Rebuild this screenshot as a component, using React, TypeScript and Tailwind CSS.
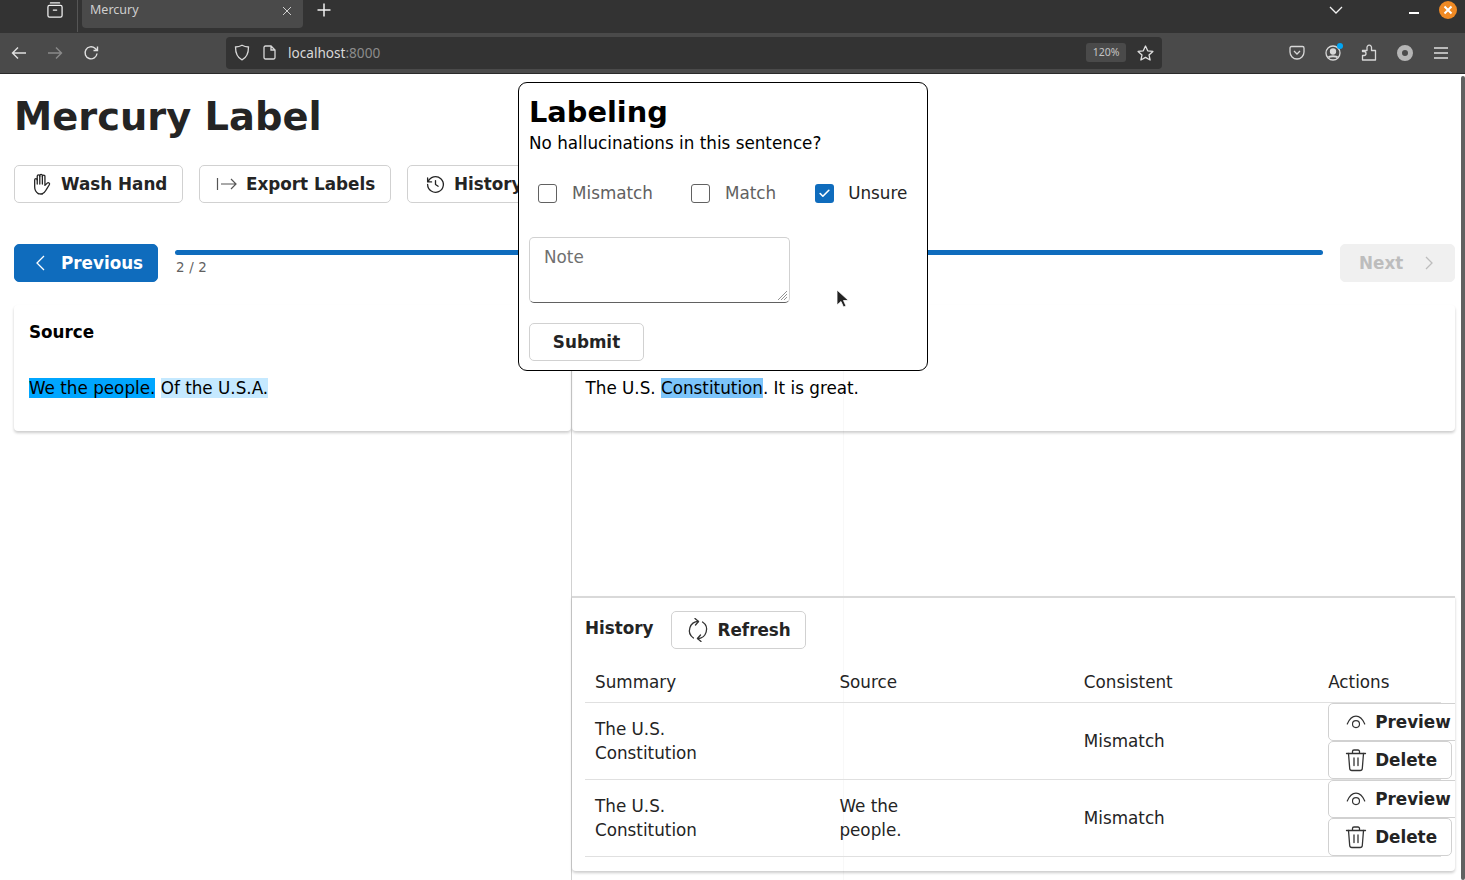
import React from 'react'
import { Check } from 'lucide-react'

const btn = 'flex items-center h-[38px] bg-white border border-[#d1d1d1] rounded-[5px] text-[#242424] font-bold text-[16.800px] leading-[24px] shrink-0'

const Stroke: React.FC<{ size?: number; className?: string; sw?: string; children: React.ReactNode }> = ({ size = 20, className, sw = '1.500', children }) => (
  <svg width={size} height={size} viewBox="0 0 24 24" fill="none" stroke="currentColor" strokeWidth={sw} strokeLinecap="round" strokeLinejoin="round" className={className}>
    {children}
  </svg>
)

const HandIcon = () => (
  <Stroke size={22} sw="1.400" className="mr-[8px] text-[#242424]">
    <path d="M8 22.500c-2.500-1.500-4-4-4-7.500V7.500a1.400 1.400 0 0 1 2.800 0V12" />
    <path d="M6.800 7.500V3.500a1.400 1.400 0 0 1 2.800 0V12" />
    <path d="M9.600 3.500V2.800a1.400 1.400 0 0 1 2.800 0V12" />
    <path d="M12.400 3.800a1.400 1.400 0 0 1 2.800 0V13.500l2.500-2.500c1.300-1.300 3.300 0.200 2.300 1.800l-3.500 5.700c-1 1.800-2.300 3.500-4.500 4.300" />
    <path d="M8 22.500c1.500 0.500 3 0.500 4.500 0.300" />
  </Stroke>
)

const RefreshIcon = () => (
  <Stroke size={24} sw="1.300" className="mr-[8px] text-[#333]">
    <path d="M12.500 3.500A9 9 0 0 0 7.500 20" />
    <path d="M9 0.500l3.500 3-3 3.500" />
    <path d="M11.500 20.500A9 9 0 0 0 16.500 4" />
    <path d="M15 23.500l-3.500-3 3-3.500" />
  </Stroke>
)

const EyeIcon = () => (
  <Stroke size={20} sw="1.400" className="text-[#333] shrink-0">
    <path d="M1.500 14.500C4 8.500 8 5 12 5s8 3.500 10.500 9.500" />
    <circle cx="12" cy="14.500" r="4.200" />
  </Stroke>
)

const TrashIcon = () => (
  <Stroke size={24} sw="1.300" className="text-[#333] shrink-0">
    <path d="M2.500 5.500h19M8.500 5V3.500A1.500 1.500 0 0 1 10 2h4a1.500 1.500 0 0 1 1.500 1.500V5" />
    <path d="M4.500 5.500l1.200 15a2.200 2.200 0 0 0 2.200 2h8.200a2.200 2.200 0 0 0 2.200-2l1.200-15" />
    <path d="M10 10v7.500M14 10v7.500" />
  </Stroke>
)

const rows = [
  { summary: ['The U.S.', 'Constitution'], source: [] as string[], consistent: 'Mismatch' },
  { summary: ['The U.S.', 'Constitution'], source: ['We the', 'people.'], consistent: 'Mismatch' },
]

const TabBar = () => (
  <div className="h-[33px] bg-[#333333] flex items-start shrink-0 text-[#f2f2f2]">
    <div className="w-[78px] h-[32px] border-r border-[#555] flex items-start justify-end pr-[12px] shrink-0">
      <Stroke size={20}>
        <path d="M6.500 3.500h11" />
        <rect x="3.500" y="6.500" width="17" height="14" rx="2" />
        <path d="M10 12h4" />
      </Stroke>
    </div>
    <div className="ml-[4px] w-[221px] h-[28px] bg-[#4a4a4a] rounded-b-[4px] flex items-center justify-between pl-[8px] pr-[11px] pb-[8px] text-[12.500px] text-[#cfcfcf] font-['Noto_Sans',sans-serif]">
      <span>Mercury</span>
      <svg width="10" height="10" viewBox="0 0 10 10" stroke="#cfcfcf" strokeWidth="1" className="mt-[1px]"><path d="M1 1l8 8M9 1l-8 8" /></svg>
    </div>
    <svg width="14" height="14" viewBox="0 0 14 14" stroke="#f2f2f2" strokeWidth="1.500" className="ml-[14px] mt-[3px]"><path d="M7 0.500v13M0.500 7h13" /></svg>
    <div className="flex-1" />
    <svg width="14" height="8" viewBox="0 0 14 8" fill="none" stroke="#f2f2f2" strokeWidth="1.300" className="mt-[6px] mr-[66px]"><path d="M1 1l6 6 6-6" /></svg>
    <div className="w-[10px] h-[2px] bg-white mt-[12px] mr-[20px]" />
    <div className="w-[18px] h-[18px] rounded-full bg-[#f08a24] flex items-center justify-center mt-[1px] mr-[8px]">
      <svg width="10" height="10" viewBox="0 0 10 10" stroke="#fff" strokeWidth="2"><path d="M1.500 1.500l7 7M8.500 1.500l-7 7" /></svg>
    </div>
  </div>
)

const ToolBar = () => (
  <div className="h-[41px] bg-[#4a4a4a] border-b border-[#2a2a2a] flex items-center shrink-0 text-[#e0e0e0] pb-[1px]">
    <svg width="16" height="14" viewBox="0 0 16 14" fill="none" stroke="#e0e0e0" strokeWidth="1.400" className="ml-[11px]"><path d="M15 7H1.500M7 1.500L1.500 7 7 12.500" /></svg>
    <svg width="16" height="14" viewBox="0 0 16 14" fill="none" stroke="#8a8a8a" strokeWidth="1.400" className="ml-[20px]"><path d="M1 7h13.500M9 1.500L14.500 7 9 12.500" /></svg>
    <svg width="16" height="16" viewBox="0 0 16 16" fill="none" stroke="#e0e0e0" strokeWidth="1.400" className="ml-[20px]"><path d="M14 8.500a6 6 0 1 1-2-5.200L14.500 5.500M14.500 1.500v4h-4" /></svg>
    <div className="ml-[127px] w-[936px] h-[32px] bg-[#333333] rounded-[4px] flex items-center">
      <svg width="16" height="17" viewBox="0 0 16 17" fill="none" stroke="#d8d8d8" strokeWidth="1.300" className="ml-[8px]"><path d="M8 1.200c2 1.100 4.200 1.700 6.500 1.800 0 5.500-1.500 10.500-6.500 12.800C3 13.500 1.500 8.500 1.500 3 3.800 2.900 6 2.300 8 1.200z" /></svg>
      <svg width="13" height="15" viewBox="0 0 13 15" fill="none" stroke="#d8d8d8" strokeWidth="1.300" className="ml-[13px]"><path d="M2.500 1h5.500l4 4v7.500a1.500 1.500 0 0 1-1.500 1.500h-8A1.500 1.500 0 0 1 1 12.500v-10A1.500 1.500 0 0 1 2.500 1zM8 1v4h4" /></svg>
      <span className="ml-[12px] mt-[1px] text-[13.600px] text-[#d8d8d8] font-['Noto_Sans',sans-serif]">localhost<span className="text-[#8c8c8c]">:8000</span></span>
      <div className="flex-1" />
      <div className="w-[40px] h-[19px] bg-[#4a4a4a] rounded-[3px] flex items-center justify-center text-[10.500px] text-[#c4c4c4] font-['Noto_Sans',sans-serif]">120%</div>
      <svg width="17" height="16" viewBox="0 0 17 16" fill="none" stroke="#e0e0e0" strokeWidth="1.300" strokeLinejoin="round" className="ml-[11px] mr-[8px]"><path d="M8.500 1l2.200 4.800 5.200.6-3.900 3.500 1.100 5.100-4.600-2.600L3.900 15 5 9.900 1.100 6.400l5.200-.6z" /></svg>
    </div>
    <div className="flex-1" />
    <svg width="16" height="15" viewBox="0 0 16 15" fill="none" stroke="#d8d8d8" strokeWidth="1.300" className="mr-[20px]"><path d="M2.500 1.500h11A1.500 1.500 0 0 1 15 3v4a7 7 0 0 1-14 0V3a1.500 1.500 0 0 1 1.500-1.500z" /><path d="M5 6l3 3 3-3" /></svg>
    <div className="relative mr-[20px] w-[16px] h-[16px]">
      <svg width="16" height="16" viewBox="0 0 16 16" fill="none" stroke="#d8d8d8" strokeWidth="1.300"><circle cx="8" cy="8" r="7" /><circle cx="8" cy="6.500" r="2.500" fill="#d8d8d8" /><path d="M3.500 12.500c1-1.600 8-1.600 9 0" strokeWidth="2" /></svg>
      <div className="absolute -top-[2px] -right-[2px] w-[6px] h-[6px] rounded-full bg-[#00a6f5]" />
    </div>
    <svg width="16" height="17" viewBox="0 0 16 17" fill="none" stroke="#d8d8d8" strokeWidth="1.300" strokeLinejoin="round" className="mr-[20px]"><path d="M1.500 16V11.500H3a2 2 0 1 0 0-4H1.500V6.500H6V4a2.300 2.300 0 1 1 4.500 0v2.500h4V16z" /></svg>
    <div className="w-[16px] h-[16px] rounded-full border-[5px] border-[#b5b5b5] bg-[#4a4a4a] mr-[20px]" />
    <svg width="16" height="12" viewBox="0 0 16 12" stroke="#e0e0e0" strokeWidth="1.300" className="mr-[16px]"><path d="M1 1h14M1 6h14M1 11h14" /></svg>
  </div>
)

const Modal = () => (
  <div className="absolute left-[518px] top-[8px] w-[410px] h-[289px] bg-white border border-black rounded-[9px] px-[10px] z-10 text-black">
    <h2 className="font-bold text-[28.800px] leading-[36px] mt-[11px]">Labeling</h2>
    <p className="text-[16.800px] leading-[24px] mt-[1px]">No hallucinations in this sentence?</p>
    <div className="flex items-center h-[20px] mt-[28px] pl-[9px] text-[16.800px]">
      <div className="w-[19px] h-[19px] rounded-[3px] border border-[#616161]" />
      <span className="ml-[15px] mt-[2px] text-[#616161]">Mismatch</span>
      <div className="w-[19px] h-[19px] rounded-[3px] border border-[#616161] ml-[38px]" />
      <span className="ml-[15px] mt-[2px] text-[#616161]">Match</span>
      <div className="w-[19px] h-[19px] rounded-[3px] bg-[#0f6cbd] ml-[39px] flex items-center justify-center">
        <Check size={13} strokeWidth={3} color="#fff" />
      </div>
      <span className="ml-[14px] mt-[2px] text-[#242424]">Unsure</span>
    </div>
    <div className="relative w-[261px] h-[66px] mt-[34px] border border-[#d1d1d1] border-b-[#616161] rounded-[5px] px-[14px] pt-[7px] text-[16.800px] text-[#707070]">
      Note
      <svg width="11" height="11" viewBox="0 0 11 11" stroke="#777" strokeWidth="0.800" className="absolute right-[1px] bottom-[1px]"><path d="M1 10l9-9M4 10l6-6M7 10l3-3" /></svg>
    </div>
    <button className={`${btn} w-[115px] mt-[20px] justify-center`}>Submit</button>
  </div>
)

const ActionBar = () => (
  <div className="flex gap-4 mt-[20px] ml-[14px]">
    <button className={`${btn} w-[169px] pl-[16px]`}>
      <HandIcon />
      Wash Hand
    </button>
    <button className={`${btn} w-[192px] pl-[16px]`}>
      <svg width="22" height="14" viewBox="0 0 22 14" fill="none" stroke="#555" strokeWidth="1.200" className="mr-[8px]"><path d="M1.500 1v12M5 7h15M15 2l5 5-5 5" /></svg>
      Export Labels
    </button>
    <button className={`${btn} w-[150px] pl-[17px]`}>
      <Stroke size={21} className="mr-[8px]"><path d="M3.500 9a9 9 0 1 1-.500 3M3 4.500V9h4.500M12 7.500V12l3 2" /></Stroke>
      History
    </button>
  </div>
)

const HistoryPanel = () => (
  <div className="pl-[13px] pb-[14px]">
    <div className="flex items-start pt-[13px]">
      <span className="font-bold text-[16.800px] text-[#242424] leading-[34px]">History</span>
      <button className={`${btn} w-[135px] ml-[17px] pl-[14px]`}>
        <RefreshIcon />
        Refresh
      </button>
    </div>
    <table className="table-fixed w-[856px] mt-[14px] text-[16.800px] text-[#242424] border-collapse">
      <thead>
        <tr className="h-[39px] border-b border-[#e0e0e0] text-left">
          <th className="font-normal pl-[10px] w-[244.400px]">Summary</th>
          <th className="font-normal pl-[10px] w-[244.400px]">Source</th>
          <th className="font-normal pl-[10px] w-[244.400px]">Consistent</th>
          <th className="font-normal pl-[10px]">Actions</th>
        </tr>
      </thead>
      <tbody>
        {rows.map((r, i) => (
          <tr key={i} className="h-[77px] border-b border-[#e0e0e0] leading-[24px]">
            <td className="pl-[10px]">{r.summary.map(s => <div key={s}>{s}</div>)}</td>
            <td className="pl-[10px]">{r.source.map(s => <div key={s}>{s}</div>)}</td>
            <td className="pl-[10px]">{r.consistent}</td>
            <td className="pl-[10px] align-top">
              <button className={`${btn} w-[140px] pl-[17px]`}>
                <span className="mr-[9px]"><EyeIcon /></span>
                Preview
              </button>
              <button className={`${btn} w-[124px] pl-[15px]`}>
                <span className="mr-[7px]"><TrashIcon /></span>
                Delete
              </button>
            </td>
          </tr>
        ))}
      </tbody>
    </table>
  </div>
)

export default function App() {
  return (
    <div className="w-[1465px] h-[880px] overflow-hidden flex flex-col bg-white font-['DejaVu_Sans',sans-serif]">
      <TabBar />
      <ToolBar />
      <div className="relative flex-1 overflow-hidden">
        <div className="absolute right-0 top-[2px] w-[4px] h-[804px] bg-[#616161] rounded-full" />
        <div className="absolute left-[843px] top-[226px] bottom-0 w-px bg-[#f8f8f8]" />
        <Modal />
        <div className="relative">
          <h1 className="ml-[14px] pt-[15px] text-[38.400px] leading-[56px] font-bold text-[#242424]">Mercury Label</h1>
          <ActionBar />
          <div className="flex items-start mt-[41px] ml-[14px] w-[1441px]">
            <button className={`${btn} bg-[#0f6cbd]! border-[#0f6cbd]! text-white! w-[144px] pl-[19px]`}>
              <svg width="12" height="16" viewBox="0 0 12 16" fill="none" stroke="#fff" strokeWidth="1.300" className="mr-[15px]"><path d="M10 1L3 8l7 7" /></svg>
              Previous
            </button>
            <div className="flex-1 ml-[17px] mr-[17px]">
              <div className="h-[5px] mt-[6px] bg-[#0f6cbd] rounded-full" />
              <div className="text-[13.400px] text-[#616161] mt-[4px] pl-[1px] leading-[18px] tracking-[0.200px]">2 / 2</div>
            </div>
            <button className={`${btn} bg-[#f0f0f0]! border-[#f0f0f0]! text-[#bdbdbd]! w-[115px] pl-[18px]`}>
              Next
              <svg width="10" height="14" viewBox="0 0 10 14" fill="none" stroke="#bdbdbd" strokeWidth="1.300" className="ml-[21px]"><path d="M2 1l6 6-6 6" /></svg>
            </button>
          </div>
          <div className="flex items-stretch h-[584px] ml-[14px] mt-[23px] w-[1441px]">
            <div className="w-[557px] shrink-0">
              <div className="h-[126px] bg-white rounded-[4px] shadow-[0_2px_3px_rgba(0,0,0,0.2)] px-[15px] pt-[15px]">
                <div className="font-bold text-[16.800px] text-black leading-[24px]">Source</div>
                <p className="text-[16.800px] leading-[24px] text-black mt-[32px]">
                  <span className="bg-[#00a6ff]">We the people.</span>{' '}
                  <span className="bg-[#c5e9ff]">Of the U.S.A.</span>
                </p>
              </div>
            </div>
            <div className="flex-1 min-w-0 border-l border-[#d1d1d1] flex flex-col">
              <div className="h-[126px] rounded-[4px] shadow-[0_2px_3px_rgba(0,0,0,0.2)] pl-[13.500px] pt-[71px] shrink-0">
                <p className="text-[16.800px] leading-[24px] text-black">
                  The U.S. <span className="bg-[#7cc4fa]">Constitution</span>. It is great.
                </p>
              </div>
              <div className="h-[165px] shrink-0" />
              <div className="border-t-2 border-[#d9d9d9] overflow-hidden shadow-[0_2px_3px_rgba(0,0,0,0.2)] rounded-b-[4px]">
                <HistoryPanel />
              </div>
            </div>
          </div>
        </div>
        {/* mouse pointer */}
        <svg width="14" height="20" viewBox="0 0 14 20" className="absolute left-[836px] top-[215px] z-20"><path d="M1 1v15l4-3.500 2.500 5.500 2.500-1-2.500-5.500H12.500z" fill="#222" stroke="#fff" strokeWidth="0.800" /></svg>
      </div>
    </div>
  )
}
